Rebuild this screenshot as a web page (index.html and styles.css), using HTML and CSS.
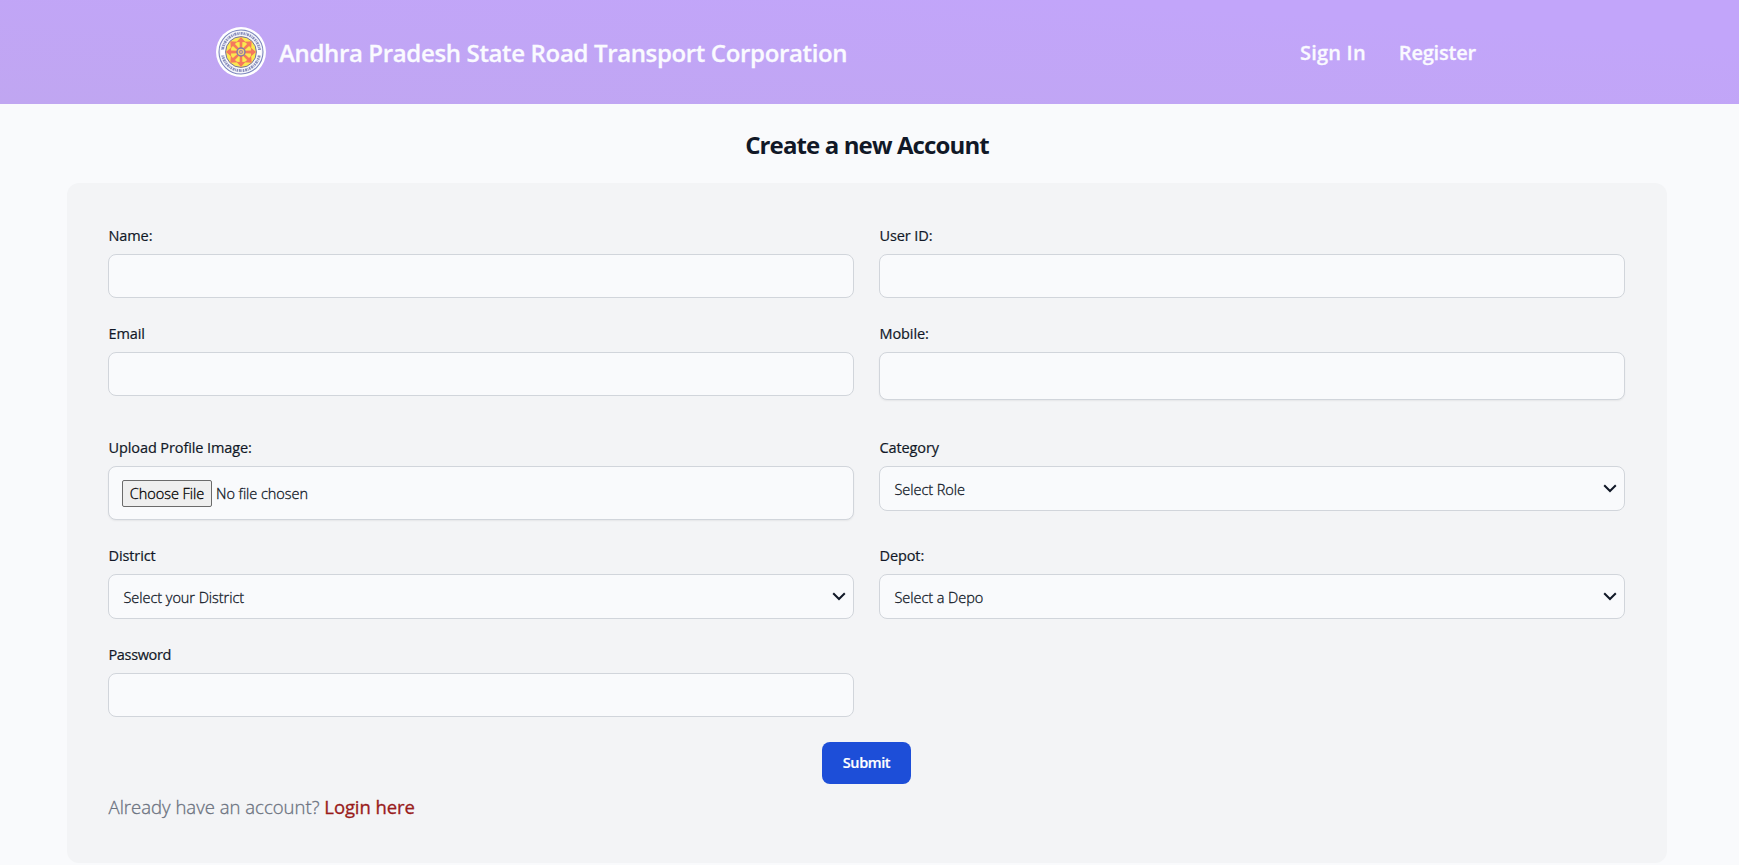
FILE: index.html
```
<!DOCTYPE html>
<html lang="en">
<head>
<meta charset="utf-8">
<title>Create a new Account</title>
<link rel="stylesheet" href="styles.css">
</head>
<body>
<header class="header">
  <a class="brand">
    <svg class="logo" viewBox="0 0 50 50">
      <defs>
        <path id="ray" d="M23.8 21L23.6 15L20.4 15.2L25 9.9L29.6 15.2L26.4 15L26.2 21Z"/>
      </defs>
      <circle cx="25" cy="25" r="25" fill="#fff"/>
      <circle cx="25" cy="25" r="22" fill="#f5f6fb" stroke="#7c86bd" stroke-width="1.1"/>
      <circle cx="25" cy="25" r="18.6" fill="none" stroke="#8b90bd" stroke-width="2.8" stroke-dasharray="1.5 .7 .8 .6 2 .8"/>
      <path d="M5 25.5h4M41 25.5h4" stroke="#fff" stroke-width="5"/>
      <circle cx="25" cy="25" r="15.4" fill="#fbe84f" stroke="#7772a1" stroke-width="1"/>
      <g fill="#f5795c">
        <use href="#ray"/><use href="#ray" transform="rotate(45 25 25)"/>
        <use href="#ray" transform="rotate(90 25 25)"/><use href="#ray" transform="rotate(135 25 25)"/>
        <use href="#ray" transform="rotate(180 25 25)"/><use href="#ray" transform="rotate(225 25 25)"/>
        <use href="#ray" transform="rotate(270 25 25)"/><use href="#ray" transform="rotate(315 25 25)"/>
      </g>
      <circle cx="25" cy="25" r="4" fill="#f6cf75" stroke="#8279a4" stroke-width="1.4"/>
      <circle cx="25" cy="25" r="1.7" fill="#d7aa8f" stroke="#8279a4" stroke-width=".6"/>
    </svg>
    <span class="brand-name">Andhra Pradesh State Road Transport Corporation</span>
  </a>
  <nav class="nav"><a class="nav-signin">Sign In</a><a class="nav-register">Register</a></nav>
</header>
<main class="page">
  <h1 class="title">Create a new Account</h1>
  <form class="card">
    <div class="row">
      <label class="field"><span class="label">Name:</span><input class="control" type="text"></label>
      <label class="field"><span class="label">User ID:</span><input class="control" type="text"></label>
    </div>
    <div class="row">
      <label class="field"><span class="label">Email</span><input class="control" type="email"></label>
      <label class="field"><span class="label">Mobile:</span><input class="control control-tall" type="text"></label>
    </div>
    <div class="row row-spaced">
      <label class="field"><span class="label">Upload Profile Image:</span><input class="control control-file" type="file"></label>
      <label class="field"><span class="label">Category</span>
        <span class="control control-select"><span class="value">Select Role</span><svg class="chevron" viewBox="0 0 14 9"><path d="M1.2 1.2L7 7L12.8 1.2"/></svg></span></label>
    </div>
    <div class="row">
      <label class="field"><span class="label">District</span>
        <span class="control control-select"><span class="value">Select your District</span><svg class="chevron" viewBox="0 0 14 9"><path d="M1.2 1.2L7 7L12.8 1.2"/></svg></span></label>
      <label class="field"><span class="label">Depot:</span>
        <span class="control control-select"><span class="value">Select a Depo</span><svg class="chevron" viewBox="0 0 14 9"><path d="M1.2 1.2L7 7L12.8 1.2"/></svg></span></label>
    </div>
    <div class="row">
      <label class="field"><span class="label label-password">Password</span><input class="control" type="password"></label>
    </div>
    <button class="submit" type="button">Submit</button>
    <p class="login">Already have an account? <a>Login here</a></p>
  </form>
</main>
</body>
</html>
```
FILE: styles.css
```
* { box-sizing: border-box; }
body {
  margin: 0;
  background: #f9fafc;
  color: #111827;
  font-family: "Open Sans", "Noto Sans", sans-serif;
  font-size: 14.5px;
}
.header {
  height: 104px;
  padding: 0 263px 0 216px;
  display: flex;
  align-items: center;
  justify-content: space-between;
  background: linear-gradient(184deg, #c2a5fa 20%, #c0a6f1 100%);
  color: #fafaff;
  font-weight: 600;
  -webkit-text-stroke: .3px;
}
.brand { display: flex; align-items: center; gap: 13px; }
.logo { width: 50px; height: 50px; }
.brand-name { padding-top: 2px; font-size: 24px; line-height: 32px; letter-spacing: -.35px; }
.nav { display: flex; gap: 33px; padding-top: 2px; font-size: 20px; line-height: 28px; }
.nav-signin { letter-spacing: .2px; }
.nav-register { letter-spacing: -.2px; }
.page { padding: 0 72px 0 67px; }
.title {
  margin: 0;
  height: 79px;
  padding-top: 25px;
  text-align: center;
  font-size: 24px;
  line-height: 32px;
  font-weight: 700;
  letter-spacing: -.88px;
}
.card {
  height: 680px;
  padding: 17px 42px 0 41px;
  border-radius: 12px;
  background: #f3f4f6;
}
.row {
  display: grid;
  grid-template-columns: 746px 746px;
  column-gap: 25px;
  align-items: start;
  padding-top: 26px;
}
.row-spaced { padding-top: 38px; }
.field { display: flex; flex-direction: column; gap: 8px; }
.label {
  padding-left: .5px;
  line-height: 20px;
  letter-spacing: -.1px;
  -webkit-text-stroke: .2px;
}
.label-password { letter-spacing: -.35px; }
.control {
  width: 100%;
  height: 44px;
  border: 1px solid #d1d5db;
  border-radius: 8px;
  background: #f9fafc;
  color: #111827;
  font: 300 14.5px/20px "Open Sans", "Noto Sans", sans-serif;
  letter-spacing: -.05px;
  -webkit-text-stroke: .3px;
}
.control-tall { height: 48px; box-shadow: 0 1px 2px rgba(0, 0, 0, .06); }
.control-file { height: 54px; padding: 13px; box-shadow: 0 1px 2px rgba(0, 0, 0, .06); }
.control-file::file-selector-button {
  height: 27px;
  width: 90px;
  padding: 1px 6px;
  margin-right: 4px;
  border: 1px solid #6b6b6b;
  border-radius: 2px;
  background: #efefef;
  color: #000;
  font: inherit;
  letter-spacing: inherit;
}
.control-select {
  height: 45px;
  padding: 0 7px 0 14.5px;
  display: flex;
  align-items: center;
  justify-content: space-between;
}
.value { padding-top: 2px; }
.chevron {
  width: 14px;
  height: 9px;
  fill: none;
  stroke: #111827;
  stroke-width: 2;
}
.submit {
  display: block;
  width: 89px;
  height: 42px;
  margin: 25px auto 0;
  border: 0;
  border-radius: 8px;
  padding: 0;
  background: #1d4ed8;
  color: #fff;
  font: 600 14.5px/20px "Open Sans", "Noto Sans", sans-serif;
  letter-spacing: -.4px;
  -webkit-text-stroke: .2px;
}
.login {
  margin: 9px 0 0;
  padding-left: .5px;
  font-size: 18.5px;
  line-height: 28px;
  font-weight: 300;
  letter-spacing: .02px;
  color: #6b7280;
  -webkit-text-stroke: .3px;
}
.login a { font-weight: 400; letter-spacing: -.1px; color: #991b1b; }
```
